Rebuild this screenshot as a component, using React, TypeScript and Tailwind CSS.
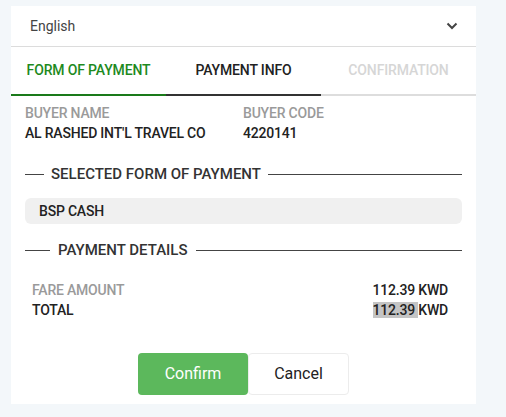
import React from "react";

export default function App() {
  return (
    <div className="w-[506px] h-[417px] bg-[#f3f7fa] pt-[6px] pl-[11px]" style={{ fontFamily: "Roboto, 'Liberation Sans', sans-serif" }}>
      <div className="w-[465px] h-[398px] bg-white flex flex-col">
        <div className="h-[41px] flex items-center justify-between pl-[19px] pr-[18px] border-b border-[#dcdcdc]">
          <span className="text-[14px] text-[#444]">English</span>
          <svg width="12" height="8" viewBox="0 0 12 8"><path d="M1.5 1.5 L6 6 L10.5 1.5" stroke="#444" strokeWidth="2" fill="none" /></svg>
        </div>
        <div className="flex h-[49px] border-b-2 border-[#dddddd]">
          <div className="flex-1 flex items-center justify-center text-[14px] tracking-[-0.15px] font-medium text-[#1e8a1e] border-b-2 border-[#1a7a1a] -mb-[2px]">FORM OF PAYMENT</div>
          <div className="flex-1 flex items-center justify-center text-[14px] tracking-[-0.15px] font-medium text-[#222] border-b-2 border-[#333] -mb-[2px]">PAYMENT INFO</div>
          <div className="flex-1 flex items-center justify-center text-[14px] tracking-[-0.15px] font-medium text-[#d6d6d6]">CONFIRMATION</div>
        </div>
        <div className="px-[14px] pt-[7px]">
          <div className="flex text-[14px] tracking-[-0.2px] font-medium leading-[20px]">
            <div className="w-[218px]">
              <div className="text-[#9a9a9a]">BUYER NAME</div>
              <div className="text-[#222]">AL RASHED INT'L TRAVEL CO</div>
            </div>
            <div>
              <div className="text-[#9a9a9a]">BUYER CODE</div>
              <div className="text-[#222]">4220141</div>
            </div>
          </div>
          <div className="flex items-center mt-[21px] h-[20px]">
            <div className="w-[19px] h-px bg-[#444]" />
            <div className="px-[7px] text-[15px] font-medium text-[#333]">SELECTED FORM OF PAYMENT</div>
            <div className="flex-1 h-px bg-[#444]" />
          </div>
          <div className="mt-[14px] h-[26px] rounded-[6px] bg-[#f0f0f0] flex items-center pl-[14px] text-[14px] tracking-[-0.2px] font-medium text-[#222]">BSP CASH</div>
          <div className="flex items-center mt-[16px] h-[20px]">
            <div className="w-[25px] h-px bg-[#444]" />
            <div className="px-[8px] text-[15px] font-medium text-[#333]">PAYMENT DETAILS</div>
            <div className="flex-1 h-px bg-[#444]" />
          </div>
          <div className="mt-[20px] pl-[7px] pr-[14px] text-[14px] tracking-[-0.2px] font-medium leading-[20px]">
            <div className="flex justify-between">
              <span className="text-[#9a9a9a]">FARE AMOUNT</span>
              <span className="text-[#222]">112.39 KWD</span>
            </div>
            <div className="flex justify-between">
              <span className="text-[#222]">TOTAL</span>
              <span className="text-[#222]"><span className="bg-[#c4c4c4]">112.39 </span>KWD</span>
            </div>
          </div>
          <div className="flex justify-center mt-[33px]">
            <button className="w-[110px] h-[42px] rounded-[4px] bg-[#5cb85c] text-white text-[16px]">Confirm</button>
            <button className="w-[101px] h-[42px] rounded-[4px] bg-white border border-[#ececec] text-[#222] text-[16px]">Cancel</button>
          </div>
        </div>
      </div>
    </div>
  );
}
